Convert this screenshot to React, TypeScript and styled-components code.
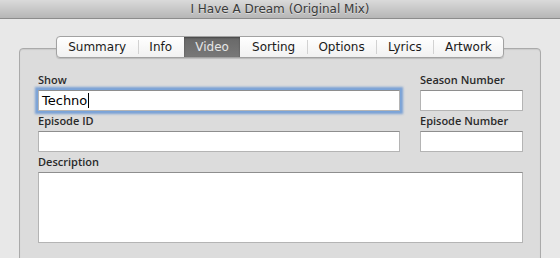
import React from 'react';
import styled, { createGlobalStyle } from 'styled-components';

const GlobalStyle = createGlobalStyle`
  html, body {
    margin: 0;
    padding: 0;
    background: #e8e8e8;
    font-family: "DejaVu Sans", "Liberation Sans", sans-serif;
    color: #222;
    overflow: hidden;
  }
`;

const tabs = ['Summary', 'Info', 'Video', 'Sorting', 'Options', 'Lyrics', 'Artwork'];

function TextBox({ value, focused }: { value?: string; focused?: boolean }) {
  return (
    <Input $focused={focused}>
      {value}
      {focused && <Caret />}
    </Input>
  );
}

function App() {
  return (
    <Window>
      <GlobalStyle />
      <TitleBar>I Have A Dream (Original Mix)</TitleBar>
      <Body>
        <TabBox>
          <TabBar>
            {tabs.map((t) => (
              <Tab key={t} $active={t === 'Video'}>
                {t}
              </Tab>
            ))}
          </TabBar>
          <Panel>
            <FieldGrid>
              <Field>
                <Label>Show</Label>
                <TextBox value="Techno" focused />
              </Field>
              <Field>
                <Label>Season Number</Label>
                <TextBox />
              </Field>
              <Field>
                <Label>Episode ID</Label>
                <TextBox />
              </Field>
              <Field>
                <Label>Episode Number</Label>
                <TextBox />
              </Field>
              <Field $wide>
                <Label>Description</Label>
                <TextArea />
              </Field>
            </FieldGrid>
          </Panel>
        </TabBox>
      </Body>
    </Window>
  );
}

export default App;

const Window = styled.div`
  width: 560px;
  height: 258px;
  overflow: hidden;
  background: #e8e8e8;
`;

const TitleBar = styled.div`
  height: 18px;
  line-height: 18px;
  text-align: center;
  font-size: 12px;
  color: #3a3a3a;
  text-shadow: 0 1px 0 rgba(255, 255, 255, 0.45);
  background: linear-gradient(#dadada, #b6b6b6);
  border-bottom: 1px solid #8c8c8c;
`;

const Body = styled.div`
  padding: 18px 19px 0 19px;
`;

const TabBox = styled.div`
  display: flex;
  flex-direction: column;
  align-items: center;
`;

const TabBar = styled.div`
  display: flex;
  height: 20px;
  margin-top: -1px;
  margin-bottom: -10px;
  position: relative;
  z-index: 1;
  border: 1px solid #a2a2a2;
  border-radius: 4px;
  background: linear-gradient(#ffffff, #f1f1f1);
  box-shadow: 0 1px 1px rgba(0, 0, 0, 0.15);
  overflow: hidden;
`;

const Tab = styled.div<{ $active?: boolean }>`
  display: flex;
  align-items: center;
  padding: 0 11.6px;
  font-size: 12px;
  color: ${(p) => (p.$active ? '#e6e6e6' : '#1a1a1a')};
  background: ${(p) => (p.$active ? 'linear-gradient(#686868, #787878)' : 'transparent')};
  box-shadow: ${(p) => (p.$active ? 'inset 0 1px 2px rgba(0,0,0,0.35)' : 'none')};
  position: relative;
  & + &::before {
    content: '';
    position: absolute;
    left: 0;
    top: 3px;
    bottom: 3px;
    width: 1px;
    background: #d2d2d2;
  }
`;

const Panel = styled.div`
  align-self: stretch;
  height: 240px;
  background: #dcdcdc;
  border: 1px solid #aaaaaa;
  border-radius: 4px;
  box-shadow: inset 0 1px 1px rgba(0, 0, 0, 0.08);
  padding: 23px 17px 0 18px;
  box-sizing: border-box;
`;

const FieldGrid = styled.div`
  display: grid;
  grid-template-columns: 362px 103px;
  column-gap: 20px;
  row-gap: 2px;
`;

const Field = styled.div<{ $wide?: boolean }>`
  display: flex;
  flex-direction: column;
  grid-column: ${(p) => (p.$wide ? '1 / span 2' : 'auto')};
`;

const Label = styled.div`
  font-family: "Open Sans", "DejaVu Sans", sans-serif;
  font-size: 11px;
  font-weight: 600;
  color: #2a2a2a;
  line-height: 15px;
  margin-bottom: 3px;
`;

const Input = styled.div<{ $focused?: boolean }>`
  height: 21px;
  box-sizing: border-box;
  background: #fff;
  border: 1px solid #b4b4b4;
  border-top-color: #8e8e8e;
  font-size: 13px;
  line-height: 19px;
  padding: 0 3px;
  color: #000;
  display: flex;
  align-items: center;
  box-shadow: ${(p) =>
    p.$focused ? '0 0 0 1px #7aa4da, 0 0 2px 3px rgba(90, 140, 210, 0.75)' : 'none'};
`;

const Caret = styled.span`
  display: inline-block;
  width: 1px;
  height: 15px;
  background: #000;
  margin-left: 1px;
`;

const TextArea = styled.div`
  height: 71px;
  box-sizing: border-box;
  background: #fff;
  border: 1px solid #b4b4b4;
  border-top-color: #8e8e8e;
`;
